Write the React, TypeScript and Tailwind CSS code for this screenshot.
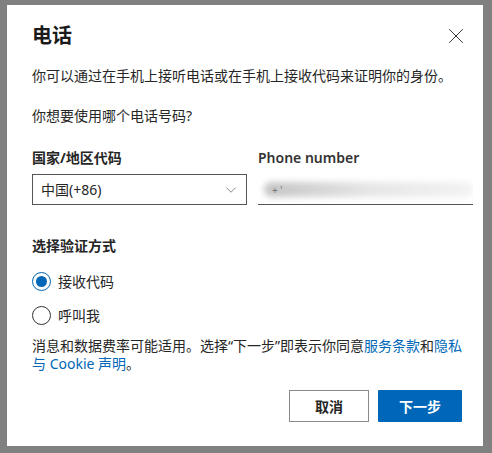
import { X, ChevronDown } from 'lucide-react'

function App() {
  return (
    <div
      className="w-[492px] h-[453px] bg-[#808080] pt-[5px] pl-[7px]"
      style={{ fontFamily: '"Noto Sans", "Noto Sans CJK SC", sans-serif' }}
    >
      <div className="w-[476px] h-[441px] bg-white pl-[25px] pr-[21px] pt-[17px] text-[#262626]">
        <div className="flex items-center justify-between h-[28px]">
          <h1 className="text-[20px] leading-[28px] font-bold text-[#1b1b1b]">电话</h1>
          <X size={26} strokeWidth={0.9} className="text-[#333] mr-[-7px]" />
        </div>

        <p className="mt-[16px] text-[14px] leading-[20px]">你可以通过在手机上接听电话或在手机上接收代码来证明你的身份。</p>
        <p className="mt-[20px] text-[14px] leading-[20px]">你想要使用哪个电话号码?</p>

        <div className="mt-[22px] flex gap-[11px]">
          <div className="w-[215px] shrink-0">
            <div className="text-[14px] leading-[20px] font-bold">国家/地区代码</div>
            <div className="mt-[6px] h-[31px] border border-[#555] flex items-center justify-between pl-[8px] pr-[6px]">
              <span className="text-[14px]">中国(+86)</span>
              <ChevronDown size={18} strokeWidth={1} className="text-[#666]" />
            </div>
          </div>
          <div className="w-[215px] shrink-0">
            <div className="text-[14px] leading-[20px] font-semibold text-[#333]">Phone number</div>
            <div className="mt-[6px] h-[31px] border-b border-[#555] relative overflow-hidden">
              <div className="absolute left-[6px] top-[8px] w-[210px] h-[15px] rounded-full bg-gradient-to-r from-[#c4c4c4] via-[#e6e6e6] to-[#f3f3f3] blur-[3px]" />
              <span className="absolute left-[14px] top-[9px] text-[10px] text-[#777]">+ '</span>
            </div>
          </div>
        </div>

        <div className="mt-[31px] text-[14px] leading-[20px] font-bold">选择验证方式</div>

        <label className="mt-[13px] flex items-center gap-[7px] h-[24px]">
          <span className="w-[19px] h-[19px] rounded-full border border-[#0067b8] flex items-center justify-center">
            <span className="w-[11px] h-[11px] rounded-full bg-[#0067b8]" />
          </span>
          <span className="text-[14px]">接收代码</span>
        </label>
        <label className="mt-[10px] flex items-center gap-[7px] h-[24px]">
          <span className="w-[19px] h-[19px] rounded-full border border-[#333]" />
          <span className="text-[14px]">呼叫我</span>
        </label>

        <p className="mt-[10px] mr-[-8px] text-[14px] leading-[18px] whitespace-nowrap">
          消息和数据费率可能适用。选择“下一步”即表示你同意<a className="text-[#0067b8]">服务条款</a>和<a className="text-[#0067b8]">隐私</a>
          <br />
          <a className="text-[#0067b8]">与 Cookie 声明</a>。
        </p>

        <div className="mt-[17px] flex justify-end gap-[9px]">
          <button className="w-[80px] h-[32px] border border-[#8a8a8a] bg-white text-[14px] font-bold text-[#262626]">取消</button>
          <button className="w-[84px] h-[32px] bg-[#0067b8] text-[14px] font-bold text-white rounded-[1px]">下一步</button>
        </div>
      </div>
    </div>
  )
}

export default App
